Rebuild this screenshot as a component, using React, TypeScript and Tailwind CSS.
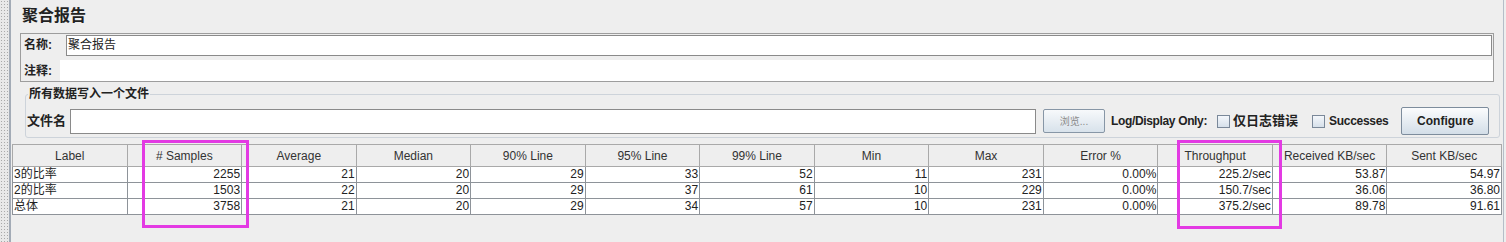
import React from "react";

const columns = [
  "Label",
  "# Samples",
  "Average",
  "Median",
  "90% Line",
  "95% Line",
  "99% Line",
  "Min",
  "Max",
  "Error %",
  "Throughput",
  "Received KB/sec",
  "Sent KB/sec",
];

const rows = [
  ["3的比率", "2255", "21", "20", "29", "33", "52", "11", "231", "0.00%", "225.2/sec", "53.87", "54.97"],
  ["2的比率", "1503", "22", "20", "29", "37", "61", "10", "229", "0.00%", "150.7/sec", "36.06", "36.80"],
  ["总体", "3758", "21", "20", "29", "34", "57", "10", "231", "0.00%", "375.2/sec", "89.78", "91.61"],
];

const Checkbox = (): JSX.Element => {
  return <span className="inline-block w-[13px] h-[13px] border border-[#7a8899] bg-gradient-to-b from-[#f4f7fb] to-[#d6e0ea]" />;
};

const App = (): JSX.Element => {
  return (
    <div className="relative flex w-[1506px] h-[242px] overflow-hidden bg-[#eeeeee] text-[12px] text-[#333333] font-['Liberation_Sans','Noto_Sans_CJK_SC',sans-serif]">
      {/* dotted splitter on the left */}
      <div className="w-[9px] h-full bg-[#e8e8e8] bg-[radial-gradient(circle,#a9a9a9_0.7px,transparent_0.9px)] bg-[length:3px_3px]" />
      <div className="w-[2px] h-full bg-[#a3abb6]" />

      <div className="w-[1493px] h-full border-r border-[#b5bec8] flex flex-col">
        <div className="pl-[11px] pt-[6px] h-[26px] leading-[20px] text-[16px] font-bold text-[#222]">聚合报告</div>

        {/* name / comment panel */}
        <div className="mt-[7px] ml-[9px] w-[1474px] h-[49px] border border-[#9d9d9d] flex flex-col">
          <div className="flex items-center h-[22px]">
            <div className="w-[45px] pl-[3px] font-bold text-[#222]">名称:</div>
            <div className="flex-1 mr-[1px] h-[21px] border border-[#8a8a8a] bg-white pl-[1px] leading-[19px] text-[#222]">聚合报告</div>
          </div>
          <div className="flex items-center h-[21px] mt-[4px]">
            <div className="w-[39px] pl-[3px] font-bold text-[#222]">注释:</div>
            <div className="flex-1 h-full bg-white" />
          </div>
        </div>

        {/* write results to file */}
        <fieldset className="mt-[4px] ml-[14px] w-[1475px] border border-[#cdd3da] rounded-[3px] pb-[2px]">
          <legend className="ml-[2px] px-[1px] leading-[16px] font-bold text-[#222]">所有数据写入一个文件</legend>
          <div className="flex items-center h-[28px] mt-[5px]">
            <div className="w-[44px] pl-[1px] font-bold text-[13px] text-[#222]">文件名</div>
            <div className="w-[966px] h-[25px] border border-[#8a8a8a] bg-white" />
            <button className="ml-[7px] w-[62px] h-[24px] border border-[#8796a6] rounded-[2px] bg-gradient-to-b from-[#f7f9fb] to-[#d8e2eb] text-[10px] text-[#8a8a8a]">浏览...</button>
            <span className="ml-[6px] font-bold tracking-[-0.35px] text-[#222]">Log/Display Only:</span>
            <span className="ml-[10px] flex items-center"><Checkbox /></span>
            <span className="ml-[3px] font-bold text-[13px] text-[#222]">仅日志错误</span>
            <span className="ml-[14px] flex items-center"><Checkbox /></span>
            <span className="ml-[4px] font-bold tracking-[-0.3px] text-[#222]">Successes</span>
            <button className="ml-[13px] w-[88px] h-[28px] border border-[#7d8c9c] rounded-[2px] bg-gradient-to-b from-[#fbfcfd] to-[#d3dee8] font-bold text-[#222]">Configure</button>
          </div>
        </fieldset>

        {/* results table */}
        <div className="mt-[6px] ml-[1px] flex-1">
          <table className="table-fixed border-collapse w-[1490px]">
            <thead>
              <tr className="h-[22px]">
                {columns.map((c) => (
                  <th key={c} className="border border-[#a9a9a9] bg-[#eeeeee] font-normal text-center text-[#333] p-0">
                    {c}
                  </th>
                ))}
              </tr>
            </thead>
            <tbody>
              {rows.map((r, i) => (
                <tr key={i} className="h-[16px] bg-white">
                  {r.map((v, j) => (
                    <td
                      key={j}
                      className={`border border-[#8e9399] p-0 leading-[15px] text-[#222] ${j === 0 ? "text-left pl-[1px]" : "text-right pr-[1px]"}`}
                    >
                      {v}
                    </td>
                  ))}
                </tr>
              ))}
            </tbody>
          </table>
        </div>
      </div>

      {/* highlight annotations */}
      <div className="absolute left-[142px] top-[140px] w-[107px] h-[88px] border-[3px] border-[#e33ae3]" />
      <div className="absolute left-[1177px] top-[140px] w-[105px] h-[89px] border-[3px] border-[#e33ae3]" />
    </div>
  );
};

export default App;
